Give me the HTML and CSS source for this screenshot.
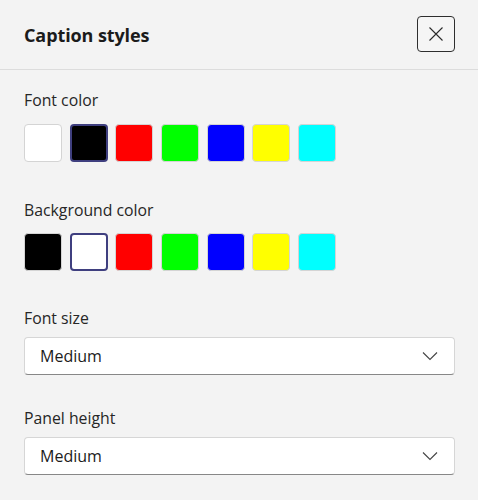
FILE: index.html
```html
<!DOCTYPE html>
<html lang="en">
<head>
    <meta charset="UTF-8">
    <meta name="viewport" content="width=device-width, initial-scale=1.0">
    <title>Caption styles</title>
    <link rel="stylesheet" href="styles.css">
</head>
<body>

<div class="panel">
    <div class="header">
        <h1>Caption styles</h1>
        <button class="close" aria-label="Close">
            <svg width="16" height="16" viewBox="0 0 16 16">
                <path d="M1.5 1.5 L14.5 14.5 M14.5 1.5 L1.5 14.5" stroke="#2b2b2b" stroke-width="1.1" fill="none"/>
            </svg>
        </button>
    </div>

    <div class="content">
        <div class="group swatch-group">
            <div class="label">Font color</div>
            <div class="swatches">
                <span class="swatch" style="background:#ffffff"></span>
                <span class="swatch selected" style="background:#000000"></span>
                <span class="swatch" style="background:#ff0000"></span>
                <span class="swatch" style="background:#00ff00"></span>
                <span class="swatch" style="background:#0000ff"></span>
                <span class="swatch" style="background:#ffff00"></span>
                <span class="swatch" style="background:#00ffff"></span>
            </div>
        </div>

        <div class="group swatch-group">
            <div class="label">Background color</div>
            <div class="swatches">
                <span class="swatch" style="background:#000000"></span>
                <span class="swatch selected" style="background:#ffffff"></span>
                <span class="swatch" style="background:#ff0000"></span>
                <span class="swatch" style="background:#00ff00"></span>
                <span class="swatch" style="background:#0000ff"></span>
                <span class="swatch" style="background:#ffff00"></span>
                <span class="swatch" style="background:#00ffff"></span>
            </div>
        </div>

        <div class="group select-group">
            <div class="label">Font size</div>
            <div class="select">
                <span>Medium</span>
                <svg width="16" height="10" viewBox="0 0 16 10">
                    <path d="M1 1.5 L8 8.5 L15 1.5" stroke="#444" stroke-width="1.1" fill="none"/>
                </svg>
            </div>
        </div>

        <div class="group select-group">
            <div class="label">Panel height</div>
            <div class="select">
                <span>Medium</span>
                <svg width="16" height="10" viewBox="0 0 16 10">
                    <path d="M1 1.5 L8 8.5 L15 1.5" stroke="#444" stroke-width="1.1" fill="none"/>
                </svg>
            </div>
        </div>
    </div>
</div>

</body>
</html>
```

FILE: styles.css
```css
body {
    margin: 0;
    font-family: "Open Sans", "Noto Sans", sans-serif;
    background-color: #f3f3f3;
    color: #1b1b1b;
}

.panel {
    width: 478px;
    height: 500px;
    background-color: #f3f3f3;
}

.header {
    height: 69px;
    padding: 0 23px 0 24px;
    display: flex;
    align-items: center;
    justify-content: space-between;
    border-bottom: 1px solid #dcdcdc;
}

.header h1 {
    margin: 0;
    font-size: 18px;
    font-weight: 700;
    letter-spacing: -0.1px;
}

.close {
    width: 38px;
    height: 36px;
    margin-top: -1px;
    padding: 0;
    display: flex;
    align-items: center;
    justify-content: center;
    background: #f5f5f5;
    border: 1px solid #2e2e2e;
    border-radius: 4px;
    cursor: pointer;
}

.content {
    padding: 19px 23px 0 24px;
}

.label {
    font-size: 15.8px;
    line-height: 22px;
    color: #262626;
}

.swatch-group {
    margin-bottom: 36px;
}

.swatch-group:first-child {
    margin-bottom: 37px;
}

.swatch-group .label {
    margin-bottom: 12px;
}

.swatch-group:first-child .label {
    margin-bottom: 13px;
}

.swatches {
    display: flex;
    gap: 7.7px;
}

.swatch {
    width: 38px;
    height: 38px;
    box-sizing: border-box;
    border: 1px solid #d4d4d4;
    border-radius: 4px;
}

.swatch.selected {
    border: 2px solid #3f3f7f;
}

.select-group {
    margin-bottom: 32px;
}

.select-group .label {
    margin-bottom: 8px;
}

.select {
    height: 38px;
    box-sizing: border-box;
    padding: 0 16px 0 15px;
    display: flex;
    align-items: center;
    justify-content: space-between;
    background-color: #ffffff;
    border: 1px solid #d6d6d6;
    border-bottom-color: #878787;
    border-radius: 4px;
    font-size: 16px;
}
```
